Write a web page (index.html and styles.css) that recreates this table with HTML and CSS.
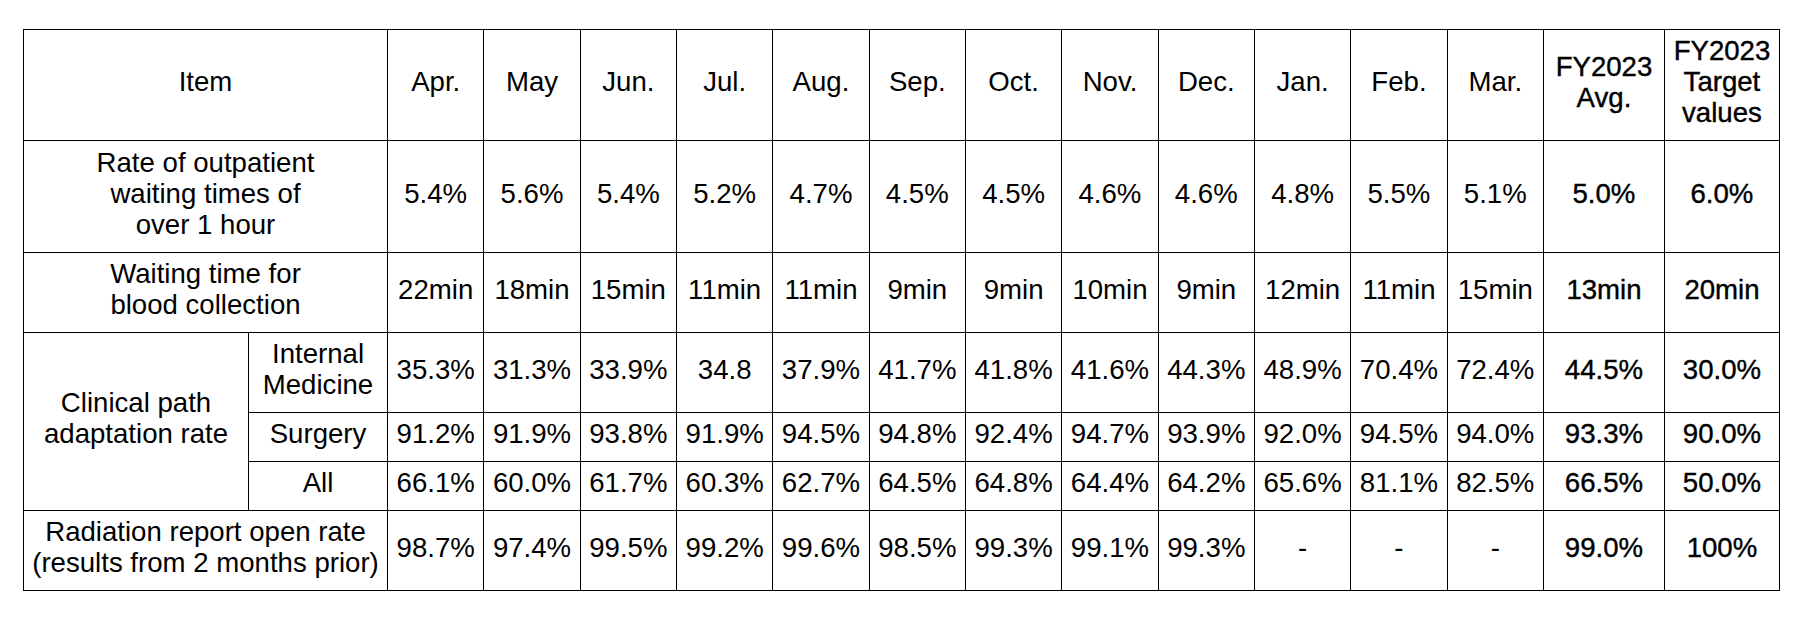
FILE: index.html
```html
<!DOCTYPE html>
<html lang="en">
<head>
<meta charset="utf-8">
<title>Indicators</title>
<link rel="stylesheet" href="styles.css">
</head>
<body>
<table class="qi">
  <colgroup>
    <col class="c-item1"><col class="c-item2">
    <col class="c-m"><col class="c-m"><col class="c-m"><col class="c-m"><col class="c-m"><col class="c-m">
    <col class="c-m"><col class="c-m"><col class="c-m"><col class="c-m"><col class="c-m"><col class="c-m">
    <col class="c-avg"><col class="c-tgt">
  </colgroup>
  <tr class="r-head">
    <td colspan="2">Item</td>
    <td>Apr.</td><td>May</td><td>Jun.</td><td>Jul.</td><td>Aug.</td><td>Sep.</td>
    <td>Oct.</td><td>Nov.</td><td>Dec.</td><td>Jan.</td><td>Feb.</td><td>Mar.</td>
    <td class="b">FY2023<br>Avg.</td>
    <td class="b">FY2023<br>Target<br>values</td>
  </tr>
  <tr class="r-tall">
    <td colspan="2">Rate of outpatient<br>waiting times of<br>over 1 hour</td>
    <td>5.4%</td><td>5.6%</td><td>5.4%</td><td>5.2%</td><td>4.7%</td><td>4.5%</td>
    <td>4.5%</td><td>4.6%</td><td>4.6%</td><td>4.8%</td><td>5.5%</td><td>5.1%</td>
    <td class="b">5.0%</td><td class="b">6.0%</td>
  </tr>
  <tr class="r-mid">
    <td colspan="2">Waiting time for<br>blood collection</td>
    <td>22min</td><td>18min</td><td>15min</td><td>11min</td><td>11min</td><td>9min</td>
    <td>9min</td><td>10min</td><td>9min</td><td>12min</td><td>11min</td><td>15min</td>
    <td class="b">13min</td><td class="b">20min</td>
  </tr>
  <tr class="r-mid">
    <td rowspan="3">Clinical path<br>adaptation rate</td>
    <td>Internal<br>Medicine</td>
    <td>35.3%</td><td>31.3%</td><td>33.9%</td><td>34.8</td><td>37.9%</td><td>41.7%</td>
    <td>41.8%</td><td>41.6%</td><td>44.3%</td><td>48.9%</td><td>70.4%</td><td>72.4%</td>
    <td class="b">44.5%</td><td class="b">30.0%</td>
  </tr>
  <tr class="r-short">
    <td>Surgery</td>
    <td>91.2%</td><td>91.9%</td><td>93.8%</td><td>91.9%</td><td>94.5%</td><td>94.8%</td>
    <td>92.4%</td><td>94.7%</td><td>93.9%</td><td>92.0%</td><td>94.5%</td><td>94.0%</td>
    <td class="b">93.3%</td><td class="b">90.0%</td>
  </tr>
  <tr class="r-short">
    <td>All</td>
    <td>66.1%</td><td>60.0%</td><td>61.7%</td><td>60.3%</td><td>62.7%</td><td>64.5%</td>
    <td>64.8%</td><td>64.4%</td><td>64.2%</td><td>65.6%</td><td>81.1%</td><td>82.5%</td>
    <td class="b">66.5%</td><td class="b">50.0%</td>
  </tr>
  <tr class="r-mid">
    <td colspan="2">Radiation report open rate<br>(results from 2 months prior)</td>
    <td>98.7%</td><td>97.4%</td><td>99.5%</td><td>99.2%</td><td>99.6%</td><td>98.5%</td>
    <td>99.3%</td><td>99.1%</td><td>99.3%</td><td>-</td><td>-</td><td>-</td>
    <td class="b">99.0%</td><td class="b">100%</td>
  </tr>
</table>
</body>
</html>
```
FILE: styles.css
```css
html, body {
  margin: 0;
  padding: 0;
  background: #fff;
}
body {
  padding: 29px 0 0 23px;
  font-family: "Liberation Sans", Arial, sans-serif;
  color: #000;
}
.qi {
  border-collapse: collapse;
  table-layout: fixed;
  width: 1756px;
  font-size: 27.6px;
  line-height: 31px;
}
.qi td {
  border: 1px solid #000;
  padding: 0 0 7px 0;
  text-align: center;
  vertical-align: middle;
  white-space: nowrap;
  overflow: hidden;
}
.c-item1 { width: 225px; }
.c-item2 { width: 139px; }
.c-m { width: 96.33px; }
.c-avg { width: 121px; }
.c-tgt { width: 115px; }
.r-head { height: 111px; }
.r-tall { height: 112px; }
.r-mid { height: 80px; }
.r-short { height: 49px; }
.qi td.b {
  -webkit-text-stroke: 0.4px #000;
}
```
